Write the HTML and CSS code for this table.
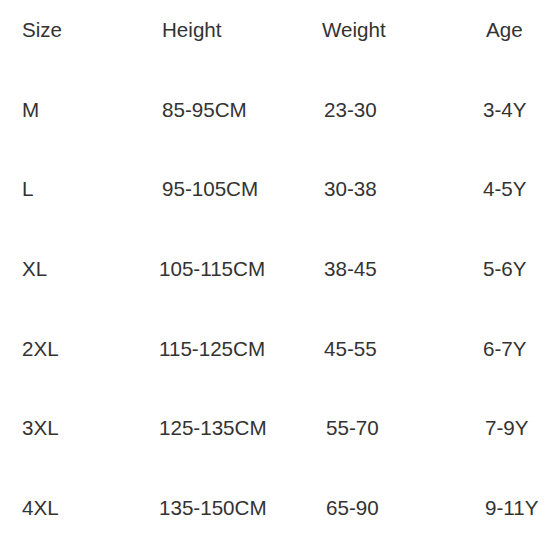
FILE: index.html
```html
<!DOCTYPE html>
<html>
<head>
<meta charset="utf-8">
<link rel="stylesheet" href="styles.css">
</head>
<body>
<div class="chart">
  <div class="cell">Size</div><div class="cell h">Height</div><div class="cell w">Weight</div><div class="cell a">Age</div>
  <div class="cell">M</div><div class="cell h">85-95CM</div><div class="cell">23-30</div><div class="cell">3-4Y</div>
  <div class="cell">L</div><div class="cell h">95-105CM</div><div class="cell">30-38</div><div class="cell">4-5Y</div>
  <div class="cell">XL</div><div class="cell">105-115CM</div><div class="cell">38-45</div><div class="cell">5-6Y</div>
  <div class="cell">2XL</div><div class="cell">115-125CM</div><div class="cell">45-55</div><div class="cell">6-7Y</div>
  <div class="cell">3XL</div><div class="cell">125-135CM</div><div class="cell r">55-70</div><div class="cell r">7-9Y</div>
  <div class="cell">4XL</div><div class="cell">135-150CM</div><div class="cell r">65-90</div><div class="cell r">9-11Y</div>
</div>
</body>
</html>
```
FILE: styles.css
```css
html, body {
  margin: 0;
  padding: 0;
  background: #ffffff;
}
.chart {
  display: grid;
  grid-template-columns: 137px 165px 159px auto;
  row-gap: 59.67px;
  padding: 20px 0 0 22px;
  font-family: "Liberation Sans", Arial, sans-serif;
  font-size: 20.6px;
  line-height: 20px;
  color: #333333;
}
.cell {
  white-space: nowrap;
}
.h {
  padding-left: 3px;
}
.w {
  margin-left: -2px;
}
.a {
  padding-left: 3px;
}
.r {
  padding-left: 2px;
}
```
